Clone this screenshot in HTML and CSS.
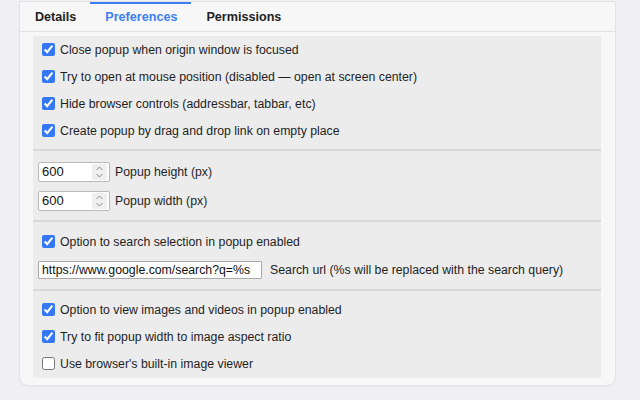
FILE: index.html
```html
<!DOCTYPE html>
<html>
<head>
<meta charset="utf-8">
<link rel="stylesheet" href="styles.css">
</head>
<body>
<div class="card">
  <div class="tabs">
    <div class="tab">Details</div>
    <div class="tab active">Preferences</div>
    <div class="tab">Permissions</div>
  </div>
  <div class="panel">
    <div class="section s1">
      <label class="row"><input type="checkbox" checked><span>Close popup when origin window is focused</span></label>
      <label class="row"><input type="checkbox" checked><span>Try to open at mouse position (disabled — open at screen center)</span></label>
      <label class="row"><input type="checkbox" checked><span>Hide browser controls (addressbar, tabbar, etc)</span></label>
      <label class="row"><input type="checkbox" checked><span>Create popup by drag and drop link on empty place</span></label>
    </div>
    <div class="section s2">
      <div class="row tall">
        <div class="numbox"><input class="num" type="text" value="600"><span class="spin"><svg width="9" height="14" viewBox="0 0 9 14"><path d="M1.5 5 L4.5 2 L7.5 5" fill="none" stroke="#8a8a8a" stroke-width="1"/><path d="M1.5 9 L4.5 12 L7.5 9" fill="none" stroke="#8a8a8a" stroke-width="1"/></svg></span></div>
        <span class="lbl">Popup height (px)</span>
      </div>
      <div class="row tall">
        <div class="numbox"><input class="num" type="text" value="600"><span class="spin"><svg width="9" height="14" viewBox="0 0 9 14"><path d="M1.5 5 L4.5 2 L7.5 5" fill="none" stroke="#8a8a8a" stroke-width="1"/><path d="M1.5 9 L4.5 12 L7.5 9" fill="none" stroke="#8a8a8a" stroke-width="1"/></svg></span></div>
        <span class="lbl">Popup width (px)</span>
      </div>
    </div>
    <div class="section s3">
      <label class="row"><input type="checkbox" checked><span>Option to search selection in popup enabled</span></label>
      <div class="row tall">
        <input class="url" type="text" value="https://www.google.com/search?q=%s">
        <span class="lbl url-lbl">Search url (%s will be replaced with the search query)</span>
      </div>
    </div>
    <div class="section s4">
      <label class="row"><input type="checkbox" checked><span>Option to view images and videos in popup enabled</span></label>
      <label class="row"><input type="checkbox" checked><span>Try to fit popup width to image aspect ratio</span></label>
      <label class="row"><input type="checkbox"><span>Use browser's built-in image viewer</span></label>
    </div>
  </div>
</div>
</body>
</html>
```

FILE: styles.css
```css
html, body {
  margin: 0;
  padding: 0;
}
body {
  background: #f0eff2;
  font-family: "Liberation Sans", Arial, sans-serif;
  font-size: 12.3px;
  color: #1f1f1f;
  width: 640px;
  height: 400px;
  overflow: hidden;
}
.card {
  margin: 1px 0 0 19px;
  width: 595px;
  background: #f7f7f7;
  border: 1px solid #e3e3e3;
  border-radius: 0 0 9px 9px;
  padding-bottom: 7px;
  box-shadow: 0 1px 2px rgba(0,0,0,0.04);
}
.tabs {
  display: flex;
  height: 29px;
  border-bottom: 1px solid #e2e2e2;
}
.tab {
  padding: 0 14px 0 15px;
  font-weight: bold;
  font-size: 12.6px;
  line-height: 27px;
  border-top: 2px solid transparent;
  color: #222;
}
.tab.active {
  color: #3d7ff0;
  border-top-color: #3d7ff0;
}
.panel {
  margin: 4px 14px 0 13px;
  background: #ececec;
}
.section {
  padding-left: 5px;
}
.section + .section {
  border-top: 2px solid #d8d8d8;
}
.s1 { padding-bottom: 5px; }
.s2 { padding-top: 6px; padding-bottom: 5px; }
.s3 { padding-top: 6px; padding-bottom: 5px; }
.s4 { padding-top: 5px; padding-bottom: 1px; }
.row {
  display: flex;
  align-items: center;
  height: 27px;
}
.row.tall {
  height: 29px;
}
.row input[type="checkbox"] {
  margin: 0 5px 0 4px;
  width: 13px;
  height: 13px;
  accent-color: #3478f6;
}
.numbox {
  display: flex;
  align-items: center;
  width: 70px;
  height: 18px;
  background: #fff;
  border: 1px solid #b9b9b9;
  border-radius: 2px;
}
.num {
  border: none;
  outline: none;
  width: 48px;
  padding: 0 0 0 3px;
  margin: 0;
  font: 13px "Liberation Sans", Arial, sans-serif;
  color: #111;
  background: transparent;
}
.spin {
  display: flex;
  align-items: center;
  justify-content: center;
  width: 15px;
  height: 16px;
  margin-left: 2px;
  background: #efefef;
  border-radius: 2px;
}
.lbl {
  margin-left: 5px;
}
.url {
  width: 216px;
  height: 16px;
  padding: 0 3px;
  margin: 0;
  border: 1px solid #a9a9a9;
  border-radius: 1px;
  font: 12.3px "Liberation Sans", Arial, sans-serif;
  color: #111;
  background: #fff;
  outline: none;
}
.url-lbl {
  margin-left: 8px;
}
```
